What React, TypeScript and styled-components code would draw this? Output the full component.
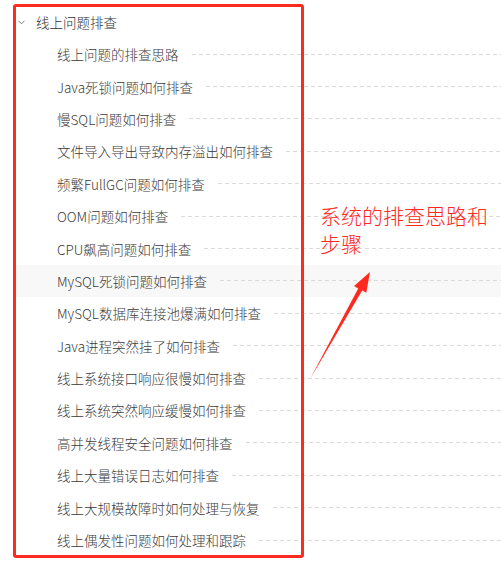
import React from 'react';
import styled, {createGlobalStyle} from 'styled-components';

const GlobalStyle = createGlobalStyle`
    html, body {
        margin: 0;
        padding: 0;
        background: #fff;
    }
    body {
        font-family: "Noto Sans CJK SC", "Noto Sans", sans-serif;
    }
`;

const items = [
    '线上问题的排查思路',
    'Java死锁问题如何排查',
    '慢SQL问题如何排查',
    '文件导入导出导致内存溢出如何排查',
    '频繁FullGC问题如何排查',
    'OOM问题如何排查',
    'CPU飙高问题如何排查',
    'MySQL死锁问题如何排查',
    'MySQL数据库连接池爆满如何排查',
    'Java进程突然挂了如何排查',
    '线上系统接口响应很慢如何排查',
    '线上系统突然响应缓慢如何排查',
    '高并发线程安全问题如何排查',
    '线上大量错误日志如何排查',
    '线上大规模故障时如何处理与恢复',
    '线上偶发性问题如何处理和跟踪',
];

const ACTIVE = 7;

const App = () => {
    return (
        <Page>
            <GlobalStyle/>
            <Tree>
                <GroupRow>
                    <Chevron viewBox='0 0 8 5'>
                        <polyline points='0.5,0.5 4,4 7.5,0.5'/>
                    </Chevron>
                    <GroupTitle>{'线上问题排查'}</GroupTitle>
                </GroupRow>
                {items.map((title, i) => (
                    <ItemRow key={title} active={i === ACTIVE}>
                        <ItemTitle>{title}</ItemTitle>
                        <Leader/>
                    </ItemRow>
                ))}
            </Tree>

            <HighlightBox/>
            <Note>{'系统的排查思路和步骤'}</Note>
            <Arrow viewBox='0 0 501 562'>
                <polygon points='310,379 358.2,288.4 354.1,286.0 370,272 366.3,292.8 362.2,290.6'/>
            </Arrow>
        </Page>
    );
};

const Page = styled.div`
    position: relative;
    width: 501px;
    height: 562px;
    overflow: hidden;
    background: #fff;
`;

const Tree = styled.div`
    display: flex;
    flex-direction: column;
    padding: 6px 0 0 16px;
`;

const GroupRow = styled.div`
    display: flex;
    align-items: center;
    height: 32px;
    padding-left: 2px;
`;

const Chevron = styled.svg`
    width: 7px;
    height: 5px;
    margin-right: 11px;
    fill: none;
    stroke: #777;
    stroke-width: 1.1;
`;

const GroupTitle = styled.span`
    font-size: 13.5px;
    font-weight: 300;
    color: #2e2e2e;
    white-space: nowrap;
`;

const ItemRow = styled.div<{active?: boolean}>`
    display: flex;
    align-items: center;
    height: 32.4px;
    padding-left: 41px;
    background: ${(p) => (p.active ? '#f8f8f8' : 'transparent')};
`;

const ItemTitle = styled.span`
    font-size: 13.5px;
    font-weight: 300;
    color: #3a3a3a;
    white-space: nowrap;
`;

const Leader = styled.span`
    flex: 1;
    height: 1px;
    margin-left: 13px;
    background-image: linear-gradient(to right, #dadada 4px, transparent 4px);
    background-size: 7px 1px;
`;

const HighlightBox = styled.div`
    position: absolute;
    left: 13px;
    top: 4px;
    width: 285px;
    height: 548px;
    border: 3px solid #ff2a1f;
    border-radius: 3px;
`;

const Note = styled.div`
    position: absolute;
    left: 320px;
    top: 201px;
    width: 176px;
    font-size: 21px;
    line-height: 28px;
    font-weight: 300;
    color: #ff2a1f;
`;

const Arrow = styled.svg`
    position: absolute;
    left: 0;
    top: 0;
    width: 501px;
    height: 562px;
    fill: #ff2a1f;
    pointer-events: none;
`;

export default App;
